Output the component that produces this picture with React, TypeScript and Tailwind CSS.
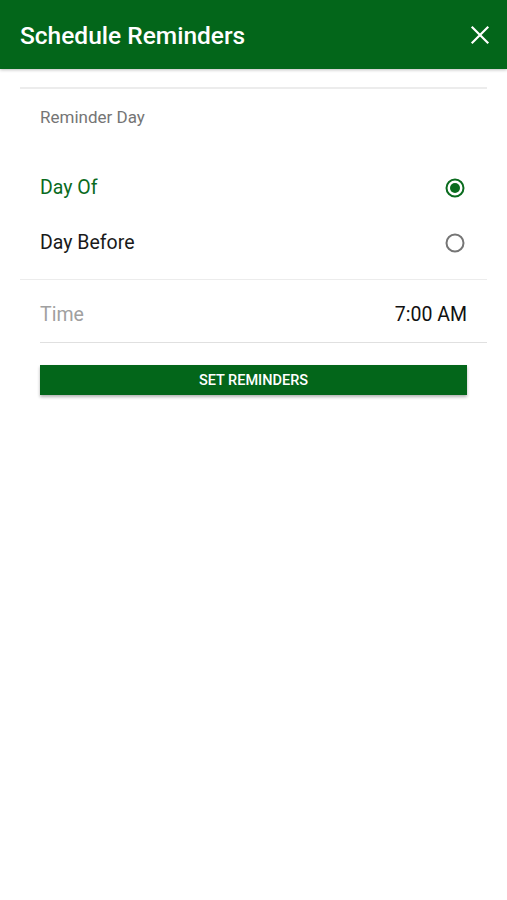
import { useState } from 'react'

function Radio({ checked }: { checked: boolean }) {
  return (
    <svg viewBox="0 0 20 20" className="h-5 w-5">
      <circle cx="10" cy="10" r="8.5" fill="none" stroke={checked ? '#0a6b1e' : '#757575'} strokeWidth="2" />
      {checked && <circle cx="10" cy="10" r="5" fill="#0a6b1e" />}
    </svg>
  )
}

export default function App() {
  const [day, setDay] = useState<'of' | 'before'>('of')
  return (
    <div className="min-h-[900px] bg-white font-['Roboto',sans-serif]">
      <header className="flex h-[69px] items-center justify-between bg-[#03661a] pl-5 pr-[15px] shadow-[0_1px_3px_rgba(0,0,0,0.25)]">
        <h1 className="mt-[2px] text-[24.5px] leading-[30px] font-medium text-white">Schedule Reminders</h1>
        <button type="button" aria-label="Close" className="text-white">
          <svg viewBox="0 0 24 24" className="h-6 w-6" fill="none" stroke="currentColor" strokeWidth="2.2" strokeLinecap="square">
            <path d="M4.5 4.5l15 15M19.5 4.5l-15 15" />
          </svg>
        </button>
      </header>

      <div className="mx-5 mt-[18px] border-t-2 border-[#ececec]" />

      <div className="px-10 pt-[18px]">
        <p className="text-[17px] leading-[20px] text-[#757575]">Reminder Day</p>
      </div>

      <div className="mt-[46px]">
        <button
          type="button"
          onClick={() => setDay('of')}
          className="flex h-[30px] w-full items-center justify-between pl-10 pr-[42px] text-left"
        >
          <span className={`text-[19.5px] leading-[30px] ${day === 'of' ? 'text-[#0a6b1e]' : 'text-[#1a1a1a]'}`}>Day Of</span>
          <Radio checked={day === 'of'} />
        </button>
        <button
          type="button"
          onClick={() => setDay('before')}
          className="mt-[25px] flex h-[30px] w-full items-center justify-between pl-10 pr-[42px] text-left"
        >
          <span className={`text-[19.5px] leading-[30px] ${day === 'before' ? 'text-[#0a6b1e]' : 'text-[#1a1a1a]'}`}>Day Before</span>
          <Radio checked={day === 'before'} />
        </button>
      </div>

      <div className="mx-5 mt-[21px] border-t border-[#ececec]" />

      <div className="flex items-center justify-between pt-5 pb-3 pl-10 pr-10">
        <span className="text-[19.5px] leading-[30px] text-[#a0a0a0]">Time</span>
        <span className="text-[19.5px] leading-[30px] text-[#111]">7:00 AM</span>
      </div>

      <div className="ml-10 mr-5 border-t border-[#e0e0e0]" />

      <div className="px-10 pt-[22px]">
        <button
          type="button"
          className="flex h-[30px] w-full items-center justify-center bg-[#03661a] pt-px text-[14.5px] font-medium text-white shadow-[0_2px_3px_rgba(0,0,0,0.3)]"
        >
          SET REMINDERS
        </button>
      </div>
    </div>
  )
}
